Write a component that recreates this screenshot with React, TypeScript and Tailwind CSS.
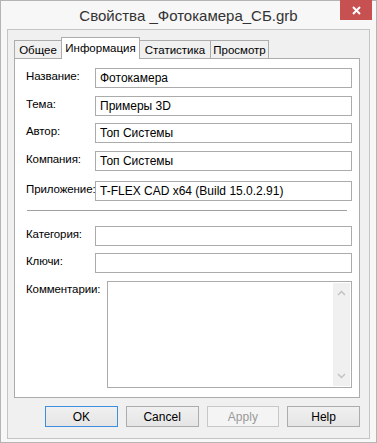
import React from 'react'

const font = "font-['Liberation_Sans',Arial,sans-serif]"

function Field({ label, value, className = '' }: { label: string; value?: string; className?: string }) {
  return (
    <div className={`flex items-center ${className}`}>
      <div className="w-[69px] shrink-0 whitespace-nowrap text-[11.5px] tracking-[-0.1px] leading-none -mt-[2px]">{label}</div>
      <div className="flex-1 h-[20px] border border-[#ababab] bg-white flex items-center px-[4px] text-[12px] leading-none whitespace-nowrap">
        {value}
      </div>
    </div>
  )
}

function Tab({ label, active, width }: { label: string; active?: boolean; width: string }) {
  if (active) {
    return (
      <div
        className={`${width} h-[22px] -ml-px -mb-px relative z-10 bg-white border border-b-0 border-[#acacac] flex items-start justify-center pt-[3px] text-[11.5px] leading-[14px] whitespace-nowrap`}
      >
        {label}
      </div>
    )
  }
  return (
    <div
      className={`${width} h-[18px] -ml-px first:ml-0 bg-[#f0f0f0] border border-b-0 border-[#acacac] flex items-center justify-center text-[11.5px] leading-[14px] whitespace-nowrap`}
    >
      {label}
    </div>
  )
}

function Button({ label, variant }: { label: string; variant?: 'default' | 'disabled' }) {
  const styles =
    variant === 'default'
      ? 'border-[#3c8fde] bg-gradient-to-b from-[#f0f0f0] to-[#e5e5e5] text-black'
      : variant === 'disabled'
        ? 'border-[#c8c8c8] bg-[#f4f4f4] text-[#9a9a9a]'
        : 'border-[#acacac] bg-gradient-to-b from-[#f0f0f0] to-[#e5e5e5] text-black'
  return (
    <div className={`w-[73px] h-[21px] border flex items-center justify-center text-[12px] ${styles}`}>{label}</div>
  )
}

export default function App() {
  return (
    <div className={`w-[377px] h-[443px] bg-[#f7f7f7] border border-[#b4b4b4] flex flex-col text-black ${font}`}>
      {/* title bar */}
      <div className="h-[28px] grid grid-cols-[1fr_auto_1fr] items-start shrink-0">
        <div />
        <div className="pt-[6px] text-[15px] leading-[17px] text-[#333]">Свойства _Фотокамера_СБ.grb</div>
        <div className="flex justify-end pr-[4px]">
          <div className="w-[32px] h-[20px] -mt-px bg-[#c75050] flex items-center justify-center">
            <svg width="9" height="9" viewBox="0 0 9 9">
              <path d="M1 1 L8 8 M8 1 L1 8" stroke="#fff" strokeWidth="2" />
            </svg>
          </div>
        </div>
      </div>

      {/* client area */}
      <div className="flex-1 mx-[6px] mb-[3px] border border-[#c4c4c4] bg-[#f0f0f0] flex flex-col pl-[6px] pr-[9px]">
        <div className="mt-[7px] flex items-end pl-0 h-[21px]">
          <Tab label="Общее" width="w-[48px]" />
          <Tab label="Информация" active width="w-[79px]" />
          <Tab label="Статистика" width="w-[72px]" />
          <Tab label="Просмотр" width="w-[59px]" />
        </div>
        <div className="h-[340px] border border-[#acacac] bg-white flex flex-col pl-[11px] pr-[7px] pt-[9px]">
          <Field label="Название:" value="Фотокамера" />
          <Field label="Тема:" value="Примеры 3D" className="mt-[8px]" />
          <Field label="Автор:" value="Топ Системы" className="mt-[7px]" />
          <Field label="Компания:" value="Топ Системы" className="mt-[8px]" />
          <Field label="Приложение:" value="T-FLEX CAD x64 (Build 15.0.2.91)" className="mt-[10px]" />
          <div className="mt-[9px] ml-px mr-[5px] h-px bg-[#a0a0a0]" />
          <Field label="Категория:" className="mt-[15px]" />
          <Field label="Ключи:" className="mt-[7px]" />
          <div className="mt-[8px] flex items-start">
            <div className="w-[81px] shrink-0 whitespace-nowrap text-[11.5px] tracking-[-0.1px] leading-none pt-[3px]">Комментарии:</div>
            <div className="flex-1 h-[107px] border border-[#ababab] bg-white flex justify-end p-px">
              <div className="w-[17px] bg-[#f0f0f0] flex flex-col items-center justify-between py-[7px]">
                <svg width="9" height="6" viewBox="0 0 9 6">
                  <path d="M1 5 L4.5 1.5 L8 5" stroke="#c2c2c2" strokeWidth="1.5" fill="none" />
                </svg>
                <svg width="9" height="6" viewBox="0 0 9 6">
                  <path d="M1 1 L4.5 4.5 L8 1" stroke="#c2c2c2" strokeWidth="1.5" fill="none" />
                </svg>
              </div>
            </div>
          </div>
        </div>
        <div className="mt-[8px] flex gap-[8px] pl-[31px]">
          <Button label="OK" variant="default" />
          <Button label="Cancel" />
          <Button label="Apply" variant="disabled" />
          <Button label="Help" />
        </div>
      </div>
    </div>
  )
}
